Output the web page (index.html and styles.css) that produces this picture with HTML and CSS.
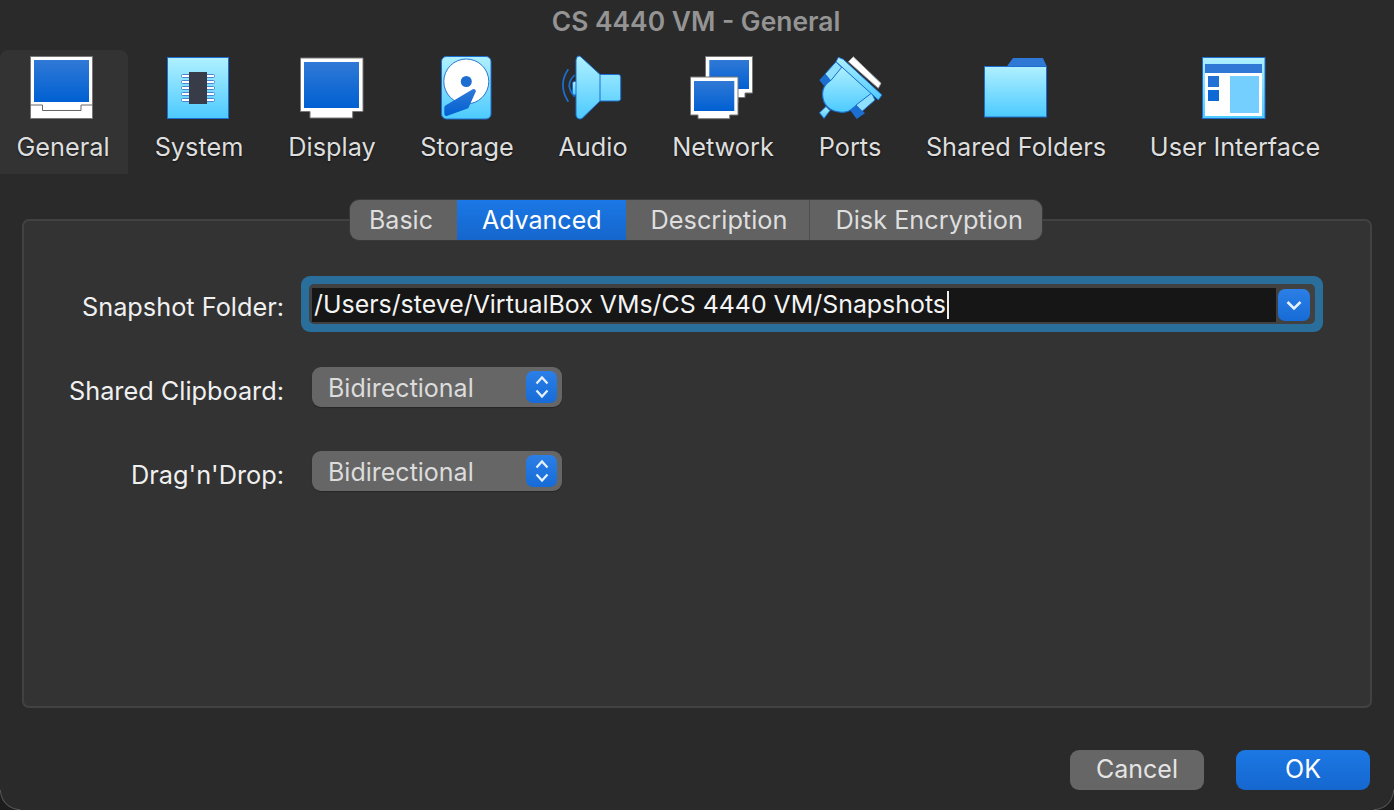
FILE: index.html
```html
<!DOCTYPE html>
<html lang="en">
<head>
  <meta charset="UTF-8">
  <title>CS 4440 VM - General</title>
  <link rel="stylesheet" href="styles.css">
</head>
<body>
  <div class="window">
    <div class="title">CS 4440 VM - General</div>

    <div class="toolbar">
      <div class="tool tool-general selected">
        <svg width="64" height="64" viewBox="1 0 64 64">
          <rect x="0.5" y="0.5" width="62" height="62" fill="#fff" stroke="#777"/>
          <rect x="4" y="4" width="55" height="42" fill="url(#blue)"/>
          <path d="M0.5 49H12.5V54.5H51V49H62.5" fill="none" stroke="#666"/>
        </svg>
        <span>General</span>
      </div>
      <div class="tool">
        <svg width="64" height="64" viewBox="0 0 64 64">
          <rect x="0.5" y="1.5" width="61" height="61" fill="url(#sky)" stroke="#1c6fd0"/>
          <g fill="#fff" stroke="#4a86cf">
            <rect x="14.5" y="18.5" width="33" height="3" rx="1"/>
            <rect x="14.5" y="24.5" width="33" height="3" rx="1"/>
            <rect x="14.5" y="30.5" width="33" height="3" rx="1"/>
            <rect x="14.5" y="36.5" width="33" height="3" rx="1"/>
            <rect x="14.5" y="42.5" width="33" height="3" rx="1"/>
          </g>
          <rect x="22" y="16" width="18" height="32" fill="#383c48"/>
        </svg>
        <span>System</span>
      </div>
      <div class="tool">
        <svg width="64" height="64" viewBox="0 0 64 64">
          <path d="M0.5 2H63V55.5H52.7V62H10V55.5H0.5Z" fill="#fff" stroke="#777"/>
          <rect x="4" y="6" width="55" height="46" fill="url(#blue)"/>
        </svg>
        <span>Display</span>
      </div>
      <div class="tool">
        <svg width="64" height="64" viewBox="0 0 64 64">
          <rect x="6.5" y="0.5" width="49.5" height="62.5" rx="5" fill="url(#sky)" stroke="#1c6fd0"/>
          <circle cx="31.3" cy="25.5" r="22.5" fill="#fff" stroke="#2a76d2"/>
          <circle cx="31.3" cy="25.5" r="5.5" fill="#1c6fd0"/>
          <path d="M10 49.7L37.7 33.3Q40 32.5 41 35L33.3 52.3L11.7 60Q9 60.5 9.3 55.7Q9 51 10 49.7Z" fill="url(#blue)"/>
        </svg>
        <span>Storage</span>
      </div>
      <div class="tool">
        <svg width="64" height="64" viewBox="0 0 64 64">
          <path d="M7.3 13.3Q-3.5 29 7.3 45.7M13.7 19Q3 29 13.7 40.7" fill="none" stroke="#1c6fd0" stroke-width="1.7"/>
          <rect x="11.5" y="25.5" width="5" height="13.5" rx="2" fill="url(#sky)" stroke="#1c6fd0"/>
          <path d="M15 4Q15.5 0 18 0Q19 0 20 1L39 18.5H57.3Q59.7 18.5 59.7 21V42.5Q59.7 45 57.3 45H39L21 62.5Q19 63.5 17 62.5Q15 61.5 15 59Z" fill="url(#sky)" stroke="#1c6fd0"/>
          <path d="M39 18.5V45" stroke="#1c6fd0"/>
        </svg>
        <span>Audio</span>
      </div>
      <div class="tool">
        <svg width="64" height="64" viewBox="0 0 64 64">
          <path d="M14.5 0.5H61.5V37H54V41.5H47V47H14.5Z" fill="#fff" stroke="#777"/>
          <rect x="18.3" y="4" width="39.7" height="29" fill="url(#blue)"/>
          <path d="M-0.5 21H47V59H38.7V62.7H7V59H-0.5Z" fill="#fff" stroke="#777"/>
          <rect x="3" y="25" width="40.3" height="30" fill="url(#blue)"/>
        </svg>
        <span>Network</span>
      </div>
      <div class="tool">
        <svg width="64" height="64" viewBox="0 0 64 64">
          <path d="M35.3 0.7L63 27.3L60.3 32.3L30.3 5.7Z" fill="#fff" stroke="#999"/>
          <path d="M1.5 56.7L8 50.5L12 54.5L6 62.5Z" fill="url(#sky)" stroke="#1c6fd0"/>
          <path d="M12 24.5Q4.5 30 4.5 38Q5 55 24 56.3Q30 56.3 34 53.3L54 37.5L23.7 10Z" fill="url(#sky)" stroke="#1c6fd0" stroke-width="1.2"/>
          <path d="M7 18L18 5.7L23.7 11.3L12.7 24.7Z" fill="#8fdfff" stroke="#1c6fd0"/>
          <path d="M38 49L53.7 37L57 44L43.7 55.7Z" fill="#8fdfff" stroke="#1c6fd0"/>
          <path d="M20.3 1.3L25.3 3.3L64 39L60.3 44L18 5.7Z" fill="url(#sky)" stroke="#1c6fd0"/>
          <path d="M1.3 24L7 18L12.7 24.7L6 30Z" fill="#1c6fd0"/>
          <path d="M32 54L38 49L47 57.3L38.7 63Z" fill="#1c6fd0"/>
        </svg>
        <span>Ports</span>
      </div>
      <div class="tool">
        <svg width="64" height="64" viewBox="0 0 64 64">
          <path d="M23 10.3L29 2H59L62.7 10.3Z" fill="#2f78d6"/>
          <rect x="0.5" y="10.5" width="62" height="50.5" fill="url(#sky)" stroke="#1c6fd0"/>
        </svg>
        <span>Shared Folders</span>
      </div>
      <div class="tool">
        <svg width="64" height="64" viewBox="0 0 64 64">
          <rect x="-0.5" y="1.5" width="62.5" height="61" fill="url(#sky)" stroke="#1c6fd0"/>
          <rect x="2" y="17" width="57" height="43" fill="#fff"/>
          <rect x="2" y="8" width="57" height="9" fill="#2f78d6"/>
          <rect x="5" y="20" width="11" height="11" fill="#2271d4"/>
          <rect x="5" y="34" width="11" height="11" fill="#0c69d6"/>
          <rect x="27" y="20" width="29" height="37" fill="#74cfff"/>
        </svg>
        <span>User Interface</span>
      </div>
    </div>

    <div class="panel">
      <div class="tabs">
        <div class="tab">Basic</div>
        <div class="tab active">Advanced</div>
        <div class="tab">Description</div>
        <div class="tab">Disk Encryption</div>
      </div>

      <div class="form">
        <div class="row row-path">
          <label>Snapshot Folder:</label>
          <div class="path-ring">
            <div class="path-box">
              <div class="path-text">/Users/steve/VirtualBox VMs/CS 4440 VM/Snapshots<i class="caret"></i></div>
              <div class="path-btn">
                <svg width="16" height="11" viewBox="0 0 16 11"><path d="M1.5 2L8 8.5L14.5 2" fill="none" stroke="#e6f1ff" stroke-width="2.6"/></svg>
              </div>
            </div>
          </div>
        </div>
        <div class="row">
          <label>Shared Clipboard:</label>
          <div class="select">
            <span>Bidirectional</span>
            <div class="stepper">
              <svg width="16" height="26" viewBox="0 0 16 26"><path d="M2.5 9.5L8 3.5L13.5 9.5M2.5 16.5L8 22.5L13.5 16.5" fill="none" stroke="#e6f1ff" stroke-width="2.2"/></svg>
            </div>
          </div>
        </div>
        <div class="row">
          <label>Drag'n'Drop:</label>
          <div class="select">
            <span>Bidirectional</span>
            <div class="stepper">
              <svg width="16" height="26" viewBox="0 0 16 26"><path d="M2.5 9.5L8 3.5L13.5 9.5M2.5 16.5L8 22.5L13.5 16.5" fill="none" stroke="#e6f1ff" stroke-width="2.2"/></svg>
            </div>
          </div>
        </div>
      </div>
    </div>

    <div class="buttons">
      <button class="btn">Cancel</button>
      <button class="btn primary">OK</button>
    </div>
  </div>

  <!-- shared gradients for the toolbar icons -->
  <svg class="defs" width="0" height="0">
    <defs>
      <linearGradient id="blue" x1="0" y1="0" x2="0" y2="1">
        <stop offset="0" stop-color="#3079d6"/>
        <stop offset="1" stop-color="#0060d2"/>
      </linearGradient>
      <linearGradient id="sky" x1="0" y1="0" x2="0" y2="1">
        <stop offset="0" stop-color="#b0f0ff"/>
        <stop offset="1" stop-color="#4ccaff"/>
      </linearGradient>
    </defs>
  </svg>
</body>
</html>
```

FILE: styles.css
```css
html, body {
  margin: 0;
  padding: 0;
  background: #2a2a2a;
}

body {
  font-family: Inter, "Liberation Sans", sans-serif;
  color: #dedede;
  overflow: hidden;
}

.defs {
  display: block;
}

.window {
  position: relative;
  width: 1394px;
  height: 810px;
  display: flex;
  flex-direction: column;
  background: #2a2a2a;
}

/* rounded window corners that show at the bottom of the shot */
.window::before,
.window::after {
  content: "";
  position: absolute;
  bottom: 0;
  width: 20px;
  height: 20px;
}

.window::before {
  left: 0;
  background: radial-gradient(circle at top right, transparent 18.5px, #555 19.5px, #1c1c1c 20.5px);
}

.window::after {
  right: 0;
  background: radial-gradient(circle at top left, transparent 18.5px, #555 19.5px, #1c1c1c 20.5px);
}

.title {
  height: 50px;
  padding: 6px 2px 0 0;
  box-sizing: border-box;
  text-align: center;
  font-size: 26.4px;
  font-weight: 600;
  line-height: 30px;
  color: #949494;
}

.toolbar {
  display: grid;
  grid-template-columns: 128px 142px 124px 146px 106px 154px 100px 232px 206px;
  height: 124px;
}

.tool {
  display: flex;
  flex-direction: column;
  align-items: center;
  padding-top: 6px;
  font-size: 25.3px;
  line-height: 30px;
  white-space: nowrap;
  text-shadow: 0 1px 2px rgba(0, 0, 0, 0.6);
}

.tool svg {
  display: block;
  margin-bottom: 12px;
  overflow: visible;
}

.tool-general {
  padding-right: 2px;
}

.selected {
  background: #333;
  border-radius: 8px 8px 0 0;
}

.panel {
  position: relative;
  margin: 45px 22px 0;
  height: 489px;
  box-sizing: border-box;
  background: #333;
  border: 2px solid #424242;
  border-radius: 7px;
}

.tabs {
  position: absolute;
  top: -21px;
  left: 326px;
  display: flex;
  height: 40px;
  border-radius: 9px;
  overflow: hidden;
  background: #626262;
  box-shadow: 0 0 0 1px #3a3a3a;
  font-size: 25.3px;
  line-height: 40px;
}

.tab {
  padding: 0 22px 0 25px;
  color: #dedede;
}

.tab:first-child {
  padding: 0 24px 0 19px;
  font-size: 25px;
}

.tab:last-child {
  padding: 0 19px 0 25px;
  border-left: 1px solid #4e4e4e;
}

.tab.active {
  background: linear-gradient(#1b78e6, #1566cc);
  color: #fff;
  padding: 0 24px 0 25px;
  font-size: 25px;
}

.form {
  padding-top: 55px;
}

.row {
  display: flex;
  align-items: center;
  height: 56px;
  margin-top: 28px;
}

.row-path {
  margin-top: 0;
}

.row label {
  width: 260px;
  text-align: right;
  font-size: 25.3px;
  color: #f0f0f0;
  flex: none;
  position: relative;
  top: 2px;
}

.path-ring {
  margin-left: 17px;
  width: 1022px;
  height: 56px;
  box-sizing: border-box;
  padding: 8px;
  background: #2a6f9c;
  border-radius: 9px;
}

.path-box {
  height: 40px;
  display: flex;
  align-items: center;
  box-sizing: border-box;
  padding: 4px 5px 2px 3px;
  background: #414141;
  border-radius: 5px;
}

.path-text {
  flex: 1;
  height: 34px;
  padding-left: 2px;
  background: #161616;
  font-size: 24.9px;
  line-height: 33px;
  color: #f4f4f4;
  white-space: nowrap;
}

.caret {
  display: inline-block;
  width: 2px;
  height: 28px;
  margin-left: 1px;
  background: #eee;
  vertical-align: -6px;
}

.path-btn {
  width: 32px;
  height: 32px;
  margin-left: 2px;
  display: flex;
  align-items: center;
  justify-content: center;
  background: linear-gradient(#2b7fe6, #166bd6);
  border-radius: 7px;
}

.select {
  margin-left: 28px;
  width: 250px;
  height: 40px;
  margin-top: -2px;
  box-sizing: border-box;
  padding: 0 5px 0 16px;
  display: flex;
  align-items: center;
  justify-content: space-between;
  background: #666;
  border-radius: 9px;
  box-shadow: 0 1px 1px rgba(0, 0, 0, 0.25);
  font-size: 25px;
  color: #dcdcdc;
}

.select span {
  padding-top: 2px;
}

.stepper {
  width: 31px;
  height: 32px;
  display: flex;
  align-items: center;
  justify-content: center;
  background: linear-gradient(#2b7fe6, #166bd6);
  border-radius: 7px;
}

.buttons {
  display: flex;
  justify-content: flex-end;
  gap: 32px;
  padding: 42px 24px 0 0;
}

.btn {
  width: 134px;
  height: 40px;
  border: none;
  border-radius: 9px;
  background: #666;
  color: #e4e4e4;
  font-family: inherit;
  font-size: 25px;
  padding: 0 0 2px;
}

.btn.primary {
  background: linear-gradient(#1c78e4, #1567cf);
  color: #fff;
}
```
